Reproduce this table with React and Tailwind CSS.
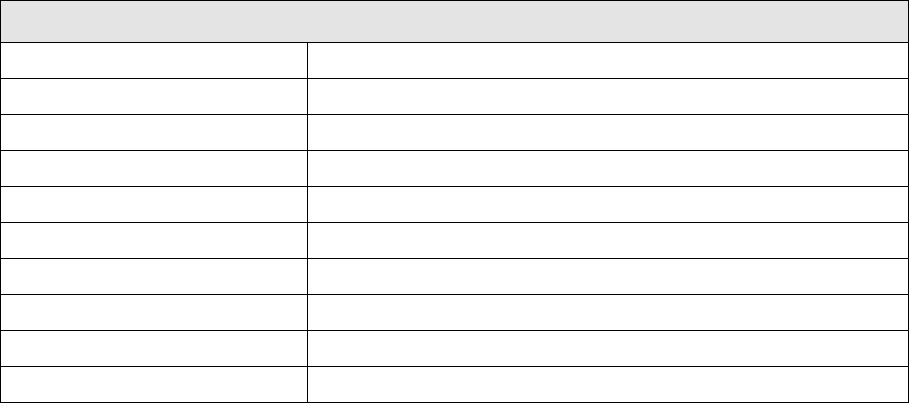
export default function App() {
  const rows = Array.from({ length: 10 }, (_, i) => i);

  return (
    <div className="bg-white min-h-screen font-['Liberation_Sans',sans-serif]">
      {/* Table */}
      <div className="w-[909px] border border-black">
        <div className="h-[42px] bg-[#e4e4e4] border-b border-black" />
        {rows.map((i) => (
          <div
            key={i}
            className={
              i === rows.length - 1
                ? "flex h-[35px]"
                : "flex h-[36px] border-b border-black"
            }
          >
            <div className="w-[307px] border-r border-black" />
            <div className="flex-1" />
          </div>
        ))}
      </div>
    </div>
  );
}
